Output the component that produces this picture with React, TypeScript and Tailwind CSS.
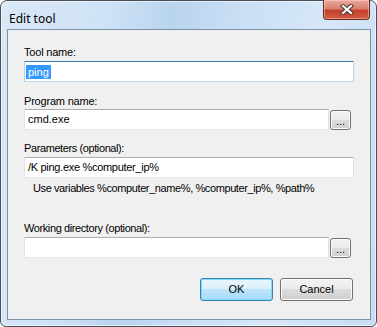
import React from "react";

const ui = { fontFamily: '"Liberation Sans", Arial, sans-serif' };

function BrowseButton() {
  return (
    <button
      type="button"
      className="ml-[1px] flex h-[20px] w-[21px] items-end justify-center rounded-[3px] border border-[#707070] bg-[linear-gradient(180deg,#f2f2f2_0%,#ebebeb_50%,#dddddd_50%,#cfcfcf_100%)] pb-[2px] text-[11px] leading-[11px] text-black shadow-[inset_0_0_0_1px_#fbfbfb]"
    >
      ...
    </button>
  );
}

function TextBox({
  value,
  className = "",
}: {
  value?: string;
  className?: string;
}) {
  return (
    <div
      className={`flex h-[21px] items-center border border-t-[#abadb3] border-r-[#dbdfe6] border-b-[#e3e9ef] border-l-[#e2e3ea] bg-white pl-[3px] text-[11px] text-black ${className}`}
    >
      {value}
    </div>
  );
}

function Label({ children, className = "" }: { children: React.ReactNode; className?: string }) {
  return <div className={`text-[11px] leading-[13px] text-black ${className}`}>{children}</div>;
}

export default function App() {
  return (
    <div className="h-[327px] w-[377px] bg-white" style={ui}>
      <div className="relative flex h-[327px] w-[377px] flex-col rounded-t-[7px] rounded-b-[6px] border border-[#4a4f57] bg-[linear-gradient(100deg,#dae8f7_0%,#cfe2f6_25%,#b9d4ef_40%,#c9def5_55%,#d6e7f8_75%,#c7dcf3_100%)] pr-[5px] pb-[6px] pl-[6px] shadow-[inset_0_0_0_1px_rgba(255,255,255,0.55)]">
        {/* title bar */}
        <div className="h-[28px] pt-[5px] pl-[2px]">
          <span
            className="text-[12px] leading-[16px] text-black"
            style={{ fontFamily: '"Noto Sans", "Open Sans", sans-serif' }}
          >
            Edit tool
          </span>
        </div>

        <div className="absolute top-[-1px] right-[6px] flex h-[20px] w-[47px] items-center justify-center rounded-b-[4px] border border-t-0 border-[#6b2a22] bg-[linear-gradient(180deg,#e9a99b_0%,#d9816f_45%,#c4402b_55%,#d25a43_100%)] shadow-[inset_0_0_0_1px_rgba(255,220,210,0.45)]">
          <svg width="14" height="11" viewBox="0 0 14 11">
            <path d="M3 2 L11 9 M11 2 L3 9" stroke="#4a3a38" strokeWidth="4.2" strokeLinecap="square" />
            <path d="M3 2 L11 9 M11 2 L3 9" stroke="#ffffff" strokeWidth="2.2" strokeLinecap="square" />
          </svg>
        </div>

        {/* client area */}
        <div className="flex flex-1 flex-col border border-[#7d91a7] bg-[#f0f0f0] pt-[16px] pr-[16px] pl-[16px]">
          <Label className="tracking-[-0.2px]">Tool name:</Label>
          <div className="mt-[2px] flex h-[21px] items-center border border-t-[#3d7bad] border-r-[#b5cfe7] border-b-[#b7d9ed] border-l-[#b5cfe7] bg-white pl-[1px] text-[11px]">
            <span className="bg-[#3399ff] px-[2px] leading-[14px] text-white">ping</span>
          </div>

          <Label className="mt-[13px] tracking-[-0.2px]">Program name:</Label>
          <div className="mt-[1px] flex items-center">
            <TextBox value="cmd.exe" className="w-[305px]" />
            <BrowseButton />
          </div>

          <Label className="mt-[12px] tracking-[-0.4px]">Parameters (optional):</Label>
          <TextBox value="/K ping.exe %computer_ip%" className="mt-[2px] tracking-[-0.3px]" />
          <Label className="mt-[4px] ml-[9px] tracking-[-0.4px]">
            Use variables %computer_name%, %computer_ip%, %path%
          </Label>

          <Label className="mt-[27px] tracking-[-0.4px]">Working directory (optional):</Label>
          <div className="mt-[2px] flex items-center">
            <TextBox className="w-[305px]" />
            <BrowseButton />
          </div>

          <div className="mt-[20px] mr-[1px] flex justify-end gap-[7px]">
            <button
              type="button"
              className="h-[23px] w-[73px] rounded-[3px] border border-[#3c7fb1] bg-[linear-gradient(180deg,#eaf6fd_0%,#d9f0fc_50%,#bee6fd_50%,#a7d9f5_100%)] text-[11px] text-black shadow-[inset_0_0_0_1px_#7fdbfb]"
            >
              OK
            </button>
            <button
              type="button"
              className="h-[23px] w-[73px] rounded-[3px] border border-[#707070] bg-[linear-gradient(180deg,#f2f2f2_0%,#ebebeb_50%,#dddddd_50%,#cfcfcf_100%)] text-[11px] text-black shadow-[inset_0_0_0_1px_#fbfbfb]"
            >
              Cancel
            </button>
          </div>
        </div>
      </div>
    </div>
  );
}
